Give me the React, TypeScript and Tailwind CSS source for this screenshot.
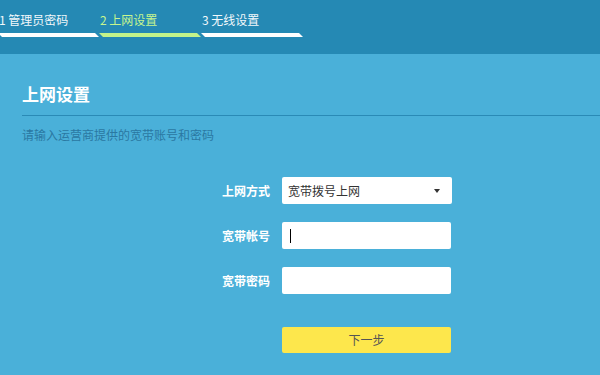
import React from "react";

const font = { fontFamily: '"Noto Sans CJK SC", "Noto Sans", sans-serif' };

export default function App() {
  return (
    <div className="w-[600px] h-[375px] overflow-hidden bg-[#4ab0d9]" style={font}>
      <div className="h-[54px] bg-[#2589b4] pt-[12px]">
        <div className="flex ml-[-2px]">
          <div className="w-[101px]">
            <div className="text-[12px] leading-[16px] text-[#f2f8fb] pl-[1px]">1 管理员密码</div>
            <div className="mt-[5px] h-[4px] w-[97px] bg-white skew-x-[45deg] origin-top" />
          </div>
          <div className="w-[101px]">
            <div className="text-[12px] leading-[16px] text-[#c6f58e] pl-[1px]">2 上网设置</div>
            <div className="mt-[5px] h-[4px] w-[98px] bg-[#c3f48a] skew-x-[45deg] origin-top" />
          </div>
          <div className="w-[101px]">
            <div className="text-[12px] leading-[16px] text-[#f2f8fb] pl-[2px]">3 无线设置</div>
            <div className="mt-[5px] h-[4px] w-[98px] bg-white skew-x-[45deg] origin-top ml-[1px]" />
          </div>
        </div>
      </div>
      <div className="pl-[22px]">
        <div className="pt-[28px] text-[17px] leading-[24px] font-bold text-white">上网设置</div>
        <div className="mt-[9px] border-b border-[#2a8ab6]" />
        <div className="mt-[11px] text-[12px] leading-[16px] text-[#2a78a2]">请输入运营商提供的宽带账号和密码</div>
        <div className="mt-[34px] flex flex-col gap-[18px]">
          <div className="flex items-center gap-[12px]">
            <div className="w-[248px] text-right text-[12px] font-bold text-white">上网方式</div>
            <div className="w-[170px] h-[27px] bg-white rounded-[2px] flex items-center justify-between pl-[6px] pr-[12px]">
              <span className="text-[12px] text-[#333]">宽带拨号上网</span>
              <span className="w-0 h-0 border-l-[3px] border-r-[3px] border-t-[4px] border-l-transparent border-r-transparent border-t-[#333]" />
            </div>
          </div>
          <div className="flex items-center gap-[12px]">
            <div className="w-[248px] text-right text-[12px] font-bold text-white">宽带帐号</div>
            <div className="w-[169px] h-[27px] bg-white rounded-[2px] flex items-center pl-[8px]">
              <span className="w-[1px] h-[14px] bg-black" />
            </div>
          </div>
          <div className="flex items-center gap-[12px]">
            <div className="w-[248px] text-right text-[12px] font-bold text-white">宽带密码</div>
            <div className="w-[169px] h-[27px] bg-white rounded-[2px]" />
          </div>
        </div>
        <div className="mt-[33px] ml-[260px] w-[169px] h-[26px] bg-[#fde74c] rounded-[2px] flex items-center justify-center text-[12px] text-[#555]">
          下一步
        </div>
      </div>
    </div>
  );
}
